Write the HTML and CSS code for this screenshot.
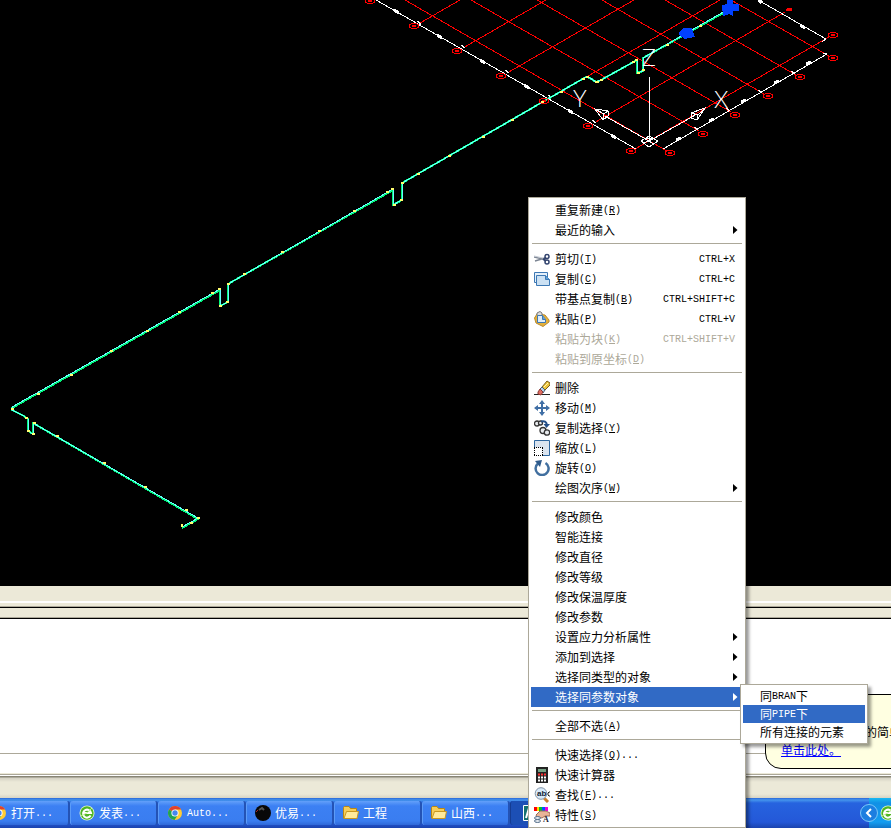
FILE: index.html
```html
<!DOCTYPE html>
<html lang="zh-CN">

<head>
    <meta charset="UTF-8" />
    <meta name="viewport" content="width=device-width, initial-scale=1.0" />
    <title>AutoCAD</title>
    <link rel="stylesheet" href="styles.css">
</head>

<body>
    <!-- Shared icons -->
    <svg class="defs" width="0" height="0" aria-hidden="true">
        <symbol id="mark" viewBox="0 0 10 6">
            <path d="M3 .5H7L9.500 2V4L7 5.500H3L.5 4V2ZM3 2L7 4M7 2L3 4M3 3H7" fill="none" stroke="#f00" />
        </symbol>
        <symbol id="chrome" viewBox="0 0 16 16">
            <circle cx="8" cy="8" r="7" fill="#fc3" />
            <path d="M8 8L2 4.400A7 7 0 0 1 14.200 4.600H8Z" fill="#e0412f" />
            <path d="M8 8L2 4.400A7 7 0 0 0 7.500 15L11 9.700Z" fill="#21a453" />
            <circle cx="8" cy="8" r="3.600" fill="#fff" />
            <circle cx="8" cy="8" r="2.700" fill="#4787ed" />
        </symbol>
        <symbol id="browser" viewBox="0 0 16 16">
            <circle cx="8" cy="8" r="7.500" fill="#e4f7d8" />
            <circle cx="8" cy="8" r="6.700" fill="#4fb523" />
            <path d="M11.600 10.500A4 4 0 1 1 12 8H4.500" fill="none" stroke="#fff" stroke-width="2" />
            <path d="M2 11Q8 9 13 3" fill="none" stroke="#c5ec9b" />
        </symbol>
        <symbol id="folder" viewBox="0 0 16 16">
            <path d="M.5 13V2.500L1.500 1.500H6L7.500 3.500H13.500V13Z" fill="#f6cd58" stroke="#b98713" />
            <path d="M1 13.500L3.500 6.500H15.500L14 13.500Z" fill="#ffea9b" stroke="#c9971f" />
        </symbol>
        <symbol id="arrow" viewBox="0 0 5 8">
            <path d="M0 0L4.500 4L0 8Z" fill="currentColor" />
        </symbol>
    </svg>

    <div class="desktop">
        <main class="canvas">
            <svg class="drawing" viewBox="0 0 891 586" preserveAspectRatio="xMinYMin slice" role="img" aria-label="管道轴测图">
                <!-- Axis grid -->
                <g class="grid">
                    <path d="M405 0L667 151M471 0L699 131M537 0L731 112M602 0L764 94M665 0L796 75M731 0L829 56" />
                    <path d="M420 23L460 0M463 48L546 0M507 73L634 0M550 98L720 0M594 123L785 12M635 149L829 37" />
                </g>
                <g class="frame">
                    <path d="M376 0L636 149M663 149L827 54L823 53M758 0L826 39L822 42M417 21L421 24L418 25M461 45L465 48M505 70L509 73M548 95L552 98M592 120L596 123M694 127L698 130M726 108L730 111M758 90L762 93M791 71L795 74" />
                </g>
                <g class="ticks">
                    <path d="M394 10L399 13M437 35L442 38M480 60L485 63M524 85L529 88M568 110L573 113M611 135L616 138M676 140L681 138M709 121L714 119M741 102L746 100M774 83L779 81M806 64L811 62M800 25L805 28M759 0L762 3" />
                </g>
                <g>
                    <use href="#mark" x="365" y="-2" width="10" height="6" />
                    <use href="#mark" x="409" y="23" width="10" height="6" />
                    <use href="#mark" x="452" y="48" width="10" height="6" />
                    <use href="#mark" x="496" y="73" width="10" height="6" />
                    <use href="#mark" x="583" y="123" width="10" height="6" />
                    <use href="#mark" x="626" y="148" width="10" height="6" />
                    <use href="#mark" x="665" y="150" width="10" height="6" />
                    <use href="#mark" x="698" y="131" width="10" height="6" />
                    <use href="#mark" x="730" y="112" width="10" height="6" />
                    <use href="#mark" x="763" y="93" width="10" height="6" />
                    <use href="#mark" x="795" y="74" width="10" height="6" />
                    <use href="#mark" x="828" y="55" width="10" height="6" />
                    <use href="#mark" x="828" y="32" width="10" height="6" />
                    <path d="M787 8H792V11H786V9Z" fill="#f00" />
                </g>

                <!-- Pipe run -->
                <g class="pipe">
                    <path d="M182 528L198 519L33 423V434L28 431V419L24 416L12 410V408L220 290V306L228 302V284L393 190V205L402 200V183L586 77L590 78L596 82L601 80L637 60V73L643 71V58L725 12" />
                    <path class="pipe-light" d="M182 527L198 518L33 423V434L28 431V419L24 416L12 410V407L220 289V306L228 302V284L393 189V205L402 200V183L586 77L590 78L596 82L601 80L637 60V73L643 71V58L725 11" />
                </g>
                <use href="#mark" x="539" y="98" width="10" height="6" />
                <path class="joints" d="M182 524v3M190 523h3M197 518h3M185 510h3M144 487h3M103 463h3M56 436h3M33 423h3M32 434h3M27 431h3M25 418h3M11 409h3M37 394h3M70 375h3M110 351h3M146 331h3M178 312h3M211 293h3M218 289h3M219 306h3M226 302h3M227 284h3M243 274h3M281 252h3M318 231h3M353 211h3M386 192h3M391 189h3M393 205h3M400 200h3M401 183h3M417 174h3M448 156h3M482 137h3M511 120h3M541 102h3M560 92h3M582 79h3M586 77h3M595 82h4M600 80h3M632 62h3M635 60h3M637 73h3M642 70h3M666 45h3M699 26h3" />
                <path d="M679 32L684 28H692L693 32L695 37L688 38L685 39L679 35Z" fill="#0040ff" />
                <path d="M727 0H733V4H739V11H733V16L729 14L723 16L722 5L727 4Z" fill="#0040ff" />

                <!-- UCS icon -->
                <g class="ucs">
                    <path d="M649.500 77V141L697 114M649 141L605 116" />
                    <path d="M641 141L649 136L658 141L649 147ZM645 139L654 144M654 138L644 143M646 138H653" />
                    <path d="M705 108L691 113V118L697 120ZM691 113L698 115L705 108M698 115L697 120" />
                    <path d="M595 109L608 111V116L603 120ZM595 109L604 114L608 111M604 114L603 120" />
                </g>
                <g class="axis-names">
                    <text x="573" y="107">Y</text>
                    <text x="714" y="108">X</text>
                    <text x="642" y="66">Z</text>
                </g>
            </svg>
        </main>

        <section class="command">
            <div class="scroll-strip"></div>
            <div class="dock-edge"></div>
            <div class="splitter"></div>
            <div class="history"></div>
            <div class="prompt"></div>
            <div class="status-bar"></div>
        </section>

        <footer class="taskbar">
            <nav class="tasks">
                <button class="task"><svg><use href="#chrome" /></svg>打开<span class="latin">...</span></button>
                <button class="task"><svg><use href="#browser" /></svg>发表<span class="latin">...</span></button>
                <button class="task"><svg><use href="#chrome" /></svg><span class="latin">Auto...</span></button>
                <button class="task">
                    <svg viewBox="0 0 16 16">
                        <circle cx="8" cy="8" r="8" fill="#080808" />
                        <path d="M4 5L7 3L9 5" fill="none" stroke="#555" stroke-width="2" />
                        <path d="M1 7L3 5" stroke="#a22" />
                    </svg>优易<span class="latin">...</span></button>
                <button class="task"><svg><use href="#folder" /></svg>工程</button>
                <button class="task"><svg><use href="#folder" /></svg>山西<span class="latin">...</span></button>
                <button class="task task-active" aria-label="AutoCAD">
                    <svg viewBox="0 0 16 16">
                        <path d="M.5 .5H15.500V15.500H.5Z" fill="#12706f" stroke="#fff" />
                        <path d="M3 13L6 3L9 13M4 9H9" fill="none" stroke="#fff" stroke-width="2" />
                    </svg></button>
            </nav>
            <div class="tray">
                <button class="chevron" aria-label="显示隐藏的图标">
                    <svg viewBox="0 0 18 18">
                        <circle cx="9" cy="9" r="8.500" fill="#1c7ee0" stroke="#7cc8f8" />
                        <path d="M11 5L7 9L11 13" fill="none" stroke="#fff" stroke-width="2" />
                    </svg>
                </button>
                <svg class="tray-icon"><use href="#browser" /></svg>
            </div>
        </footer>

        <aside class="balloon">
            <p class="balloon-text">的简单</p>
            <a href="#">单击此处。</a>
        </aside>

        <!-- Right-click menu -->
        <div class="menu context-menu">
            <button class="item"><i class="icon"></i>重复新建<span class="latin">(<u>R</u>)</span></button>
            <button class="item has-sub"><i class="icon"></i>最近的输入<svg class="arrow"><use href="#arrow" /></svg></button>
            <hr>
            <button class="item">
                <svg class="icon" viewBox="0 0 16 16">
                    <path d="M0 6L11 8.500M1 10L11 7" stroke="#7d8694" stroke-width="1.500" />
                    <path d="M0 5L9 7" stroke="#c4cad3" />
                    <circle cx="13" cy="5.500" r="2" fill="none" stroke="#34456f" stroke-width="1.500" />
                    <circle cx="13" cy="11" r="2" fill="none" stroke="#34456f" stroke-width="1.500" />
                    <path d="M9 8L12 10M10 8L12 7" stroke="#34456f" stroke-width="2" />
                </svg>剪切<span class="latin">(<u>T</u>)</span><kbd class="latin">CTRL+X</kbd></button>
            <button class="item">
                <svg class="icon" viewBox="0 0 16 16">
                    <path d="M.5 1.500H13.500V11.500H.5Z" fill="#e5f0fa" stroke="#3d78b4" />
                    <path d="M2.500 4.500H11.500L15.500 8.500V14.500H2.500Z" fill="#cce1f3" stroke="#3d78b4" />
                    <path d="M11.500 4.500V8.500H15.500" fill="#5da0d8" stroke="#3d78b4" />
                </svg>复制<span class="latin">(<u>C</u>)</span><kbd class="latin">CTRL+C</kbd></button>
            <button class="item"><i class="icon"></i>带基点复制<span class="latin">(<u>B</u>)</span><kbd class="latin">CTRL+SHIFT+C</kbd></button>
            <button class="item">
                <svg class="icon" viewBox="0 0 16 16">
                    <path d="M3 3L11 4L15 9V11L9 15.500L2 12L.5 7Z" fill="#e5b13c" stroke="#b98a2e" />
                    <path d="M3 4V2L6 .5L8 2V4" fill="#ddd" stroke="#777" />
                    <path d="M3.500 4.500H8.500L11.500 8.500V11.500H3.500Z" fill="#e0edf8" stroke="#3d78b4" />
                    <path d="M8.500 4.500V8.500H11.500" fill="#5da0d8" stroke="#3d78b4" />
                </svg>粘贴<span class="latin">(<u>P</u>)</span><kbd class="latin">CTRL+V</kbd></button>
            <button class="item" disabled><i class="icon"></i>粘贴为块<span class="latin">(<u>K</u>)</span><kbd class="latin">CTRL+SHIFT+V</kbd></button>
            <button class="item" disabled><i class="icon"></i>粘贴到原坐标<span class="latin">(<u>D</u>)</span></button>
            <hr>
            <button class="item">
                <svg class="icon" viewBox="0 0 16 16">
                    <path d="M0 14.500H16" stroke="#222" />
                    <path d="M8 7L13 1L16 3V5L10 11Z" fill="#edc43c" stroke="#765d1c" />
                    <path d="M6 9L8 7L11 10L9 13Z" fill="#b8d2e8" stroke="#456180" />
                    <path d="M4 12L6 9L9 12L7 15L4 14Z" fill="#e16e62" stroke="#8c3b35" />
                    <path d="M10 7L14 3" stroke="#fff7b2" />
                </svg>删除</button>
            <button class="item">
                <svg class="icon" viewBox="0 0 16 16">
                    <path d="M8 2V14M2 8H14" stroke="#3f6ea5" stroke-width="2" />
                    <path d="M8 0L11 4H5ZM8 16L5 12H11ZM0 8L4 5V11ZM16 8L12 11V5Z" fill="#3f6ea5" />
                </svg>移动<span class="latin">(<u>M</u>)</span></button>
            <button class="item">
                <svg class="icon" viewBox="0 0 16 16">
                    <g fill="#e9ecef" stroke="#333" stroke-width="1.300">
                        <circle cx="3" cy="3.500" r="2.500" />
                        <circle cx="6.500" cy="3" r="2" />
                        <circle cx="9" cy="10.500" r="3" />
                        <circle cx="13" cy="12.500" r="2.700" />
                    </g>
                    <path d="M7 1.500Q12 0 13 5" fill="none" stroke="#244f88" stroke-width="2" />
                    <path d="M9.500 4H16L12.500 8Z" fill="#244f88" />
                </svg>复制选择<span class="latin">(<u>Y</u>)</span></button>
            <button class="item">
                <svg class="icon" viewBox="0 0 16 16">
                    <path d="M.5 .5H15.500V15.500H.5Z" fill="#dbe4ef" stroke="#2f679f" />
                    <path d="M0 7.500H8.500V16H0Z" fill="#fff" />
                    <path d="M0 7.500H9M8.500 8V16M.5 8V16M0 15.500H9" fill="none" stroke="#000" stroke-dasharray="1 1" />
                </svg>缩放<span class="latin">(<u>L</u>)</span></button>
            <button class="item">
                <svg class="icon" viewBox="0 0 16 16">
                    <path d="M4 3.500A6.500 6.500 0 1 0 11.500 3" fill="none" stroke="#416f9f" stroke-width="2.500" />
                    <path d="M1 1L8 0L6 7Z" fill="#2e5a8b" />
                </svg>旋转<span class="latin">(<u>O</u>)</span></button>
            <button class="item has-sub"><i class="icon"></i>绘图次序<span class="latin">(<u>W</u>)</span><svg class="arrow"><use href="#arrow" /></svg></button>
            <hr>
            <button class="item"><i class="icon"></i>修改颜色</button>
            <button class="item"><i class="icon"></i>智能连接</button>
            <button class="item"><i class="icon"></i>修改直径</button>
            <button class="item"><i class="icon"></i>修改等级</button>
            <button class="item"><i class="icon"></i>修改保温厚度</button>
            <button class="item"><i class="icon"></i>修改参数</button>
            <button class="item has-sub"><i class="icon"></i>设置应力分析属性<svg class="arrow"><use href="#arrow" /></svg></button>
            <button class="item has-sub"><i class="icon"></i>添加到选择<svg class="arrow"><use href="#arrow" /></svg></button>
            <button class="item has-sub"><i class="icon"></i>选择同类型的对象<svg class="arrow"><use href="#arrow" /></svg></button>
            <div class="sub-wrap">
                <button class="item has-sub selected"><i class="icon"></i>选择同参数对象<svg class="arrow"><use href="#arrow" /></svg></button>
                <div class="menu submenu">
                    <button class="item">同<span class="latin">BRAN</span>下</button>
                    <button class="item selected">同<span class="latin">PIPE</span>下</button>
                    <button class="item">所有连接的元素</button>
                </div>
            </div>
            <hr>
            <button class="item"><i class="icon"></i>全部不选<span class="latin">(<u>A</u>)</span></button>
            <hr>
            <button class="item"><i class="icon"></i>快速选择<span class="latin">(<u>Q</u>)...</span></button>
            <button class="item">
                <svg class="icon" viewBox="0 0 16 16">
                    <path d="M2 0H14V16H2Z" fill="#222" />
                    <path d="M4 2H12V5H4Z" fill="#75a183" />
                    <path d="M4 7.500H12" stroke="#f33" stroke-width="2" stroke-dasharray="2 1" />
                    <path d="M4 10.500H12M4 13.500H12" stroke="#fff" stroke-width="2" stroke-dasharray="2 1" />
                </svg>快速计算器</button>
            <button class="item">
                <svg class="icon" viewBox="0 0 16 16">
                    <path d="M10 11L14 15" stroke="#cb7f2c" stroke-width="3" />
                    <circle cx="7" cy="6.500" r="5.800" fill="#d8eafa" stroke="#8194a8" />
                    <text class="find-text" x="3" y="9">ab</text>
                    <path d="M16 5H15L14 6V8L15 9H16" fill="none" stroke="#222" />
                </svg>查找<span class="latin">(<u>F</u>)...</span></button>
            <button class="item">
                <svg class="icon" viewBox="0 0 16 16">
                    <path d="M0 0H3V4H0Z" fill="#f00" />
                    <path d="M3 0H5V4H3Z" fill="#fd0" />
                    <path d="M5 0H8V4H5Z" fill="#0b3" />
                    <path d="M8 0H11V4H8Z" fill="#05f" />
                    <path d="M11 0H14V4H11Z" fill="#e0d" />
                    <path d="M2 8L6 4L12 4L16 6V9L11 9L8 11L3 10Z" fill="#e9b497" stroke="#9a6c57" />
                    <ellipse cx="3.500" cy="11" rx="3" ry="1.500" fill="#e2e7ec" stroke="#536d89" />
                    <ellipse cx="3.500" cy="14" rx="3" ry="1.500" fill="#e2e7ec" stroke="#536d89" />
                    <text class="prop-text" x="9" y="15">A</text>
                </svg>特性<span class="latin">(<u>S</u>)</span></button>
        </div>
    </div>
</body>

</html>
```
FILE: styles.css
```css
* {
    margin: 0;
    padding: 0;
    box-sizing: border-box;
}

body {
    font-family: "Noto Sans CJK SC", sans-serif;
    font-size: 12px;
    line-height: 18px;
    color: #000;
    overflow: hidden;
}

button {
    font: inherit;
    color: inherit;
    border: none;
    background: none;
}

.defs {
    position: absolute;
}

.latin {
    padding-top: 2px;
    font-family: "Liberation Mono", monospace;
    font-size: 10px;
}

.desktop {
    position: relative;
    display: flex;
    flex-direction: column;
    height: 100vh;
    min-height: 828px;
    overflow: hidden;
}

/* Drawing area */
.canvas {
    flex: 1;
    min-height: 0;
    background-color: #000;
    overflow: hidden;
}

.drawing {
    display: block;
    width: 100%;
    height: 100%;
    shape-rendering: crispEdges;
}

.grid path {
    fill: none;
    stroke: #f00;
}

.frame path,
.ucs path {
    fill: none;
    stroke: #fff;
}

.ticks path {
    stroke: #fff;
    stroke-width: 3px;
}

.pipe path {
    fill: none;
    stroke: #00f57a;
    stroke-width: 2px;
}

.pipe .pipe-light {
    stroke: #6ff;
    stroke-width: 1px;
}

.joints {
    fill: none;
    stroke: #ffff70;
    stroke-width: 2px;
}

.axis-names {
    font-family: Lato, sans-serif;
    font-size: 23px;
    font-weight: 300;
    fill: #fff;
}

/* Command window */
.scroll-strip {
    height: 20px;
    background-color: #ece9d8;
    border-bottom: 3px solid #ece9d8;
    background-image: linear-gradient(#fff, #fff);
    background-repeat: no-repeat;
    background-size: 100% 2px;
    background-position: 0 15px;
}

.dock-edge {
    height: 2px;
    background-color: #000;
    border-top: 1px solid #aca899;
}

.splitter {
    height: 11px;
    background-color: #ece9d8;
    border-bottom: 1px solid #000;
    box-shadow: inset 0 -1px #aca899;
}

.history {
    height: 135px;
    background-color: #fff;
    border-bottom: 1px solid #aca899;
}

.prompt {
    height: 20px;
    background-color: #fff;
    border-bottom: 1px solid #ece9d8;
}

.status-bar {
    height: 24px;
    border-top: 1px solid #aca899;
    background-image: linear-gradient(#fff 1px, #888576 1px, #888576 2px, #d4d1c3 3px, #ece9d8 7px, #ece9d8 19px, #d8d4c4);
}

/* Taskbar */
.taskbar {
    display: flex;
    justify-content: space-between;
    height: 30px;
    background-image: linear-gradient(#2b67d8, #4595ed 2px, #2663df 5px, #2458d8 24px, #1b43ae);
}

.tasks {
    display: flex;
    margin-left: -18px;
    padding: 3px 0;
}

.task {
    display: flex;
    align-items: center;
    width: 88px;
    padding-left: 8px;
    color: #fff;
    background-image: linear-gradient(#63a0fa, #3c80f3 5px, #3a7df0 20px, #2f68d8);
    border-left: 1px solid #5c9cf8;
    border-right: 2px solid #2453b5;
    border-radius: 3px;
}

.task svg {
    flex: none;
    width: 16px;
    height: 16px;
    margin-right: 4px;
}

.task-active {
    padding-left: 12px;
    background: #1c4fb5;
    border-color: #153c91;
}

.tray {
    display: flex;
    align-items: center;
    width: 22px;
    background-image: linear-gradient(#19b9f2, #1190e5 5px, #149df0 24px, #1074c7);
}

.chevron {
    flex: none;
    width: 18px;
    height: 18px;
    margin-left: -9px;
}

.chevron svg {
    display: block;
}

.tray-icon {
    flex: none;
    width: 16px;
    height: 16px;
    margin-left: 2px;
}

/* Tray balloon, runs off the right edge */
.balloon {
    position: absolute;
    left: 765px;
    right: -20px;
    bottom: 59px;
    height: 75px;
    padding: 28px 0 0 15px;
    background-color: #ffffe1;
    border: 1px solid #000;
    border-radius: 16px;
    white-space: nowrap;
}

.balloon-text {
    padding-left: 84px;
}

.balloon a {
    color: #00f;
}

/* Menus */
.menu {
    position: absolute;
    padding: 2px;
    background-color: #fff;
    border: 1px solid #aca899;
    box-shadow: 3px 3px 3px rgba(0, 0, 0, 0.4);
}

.context-menu {
    top: 197px;
    left: 528px;
    width: 218px;
}

.menu hr {
    height: 1px;
    margin: 3px 1px 5px;
    border: none;
    background-color: #aca899;
}

.item {
    display: flex;
    align-items: center;
    width: 100%;
    height: 20px;
    padding: 0 8px 0 3px;
    white-space: nowrap;
}

.item:disabled {
    color: #aca899;
}

.item.selected,
.item:hover:enabled {
    color: #fff;
    background-color: #316ac5;
}

.item.has-sub {
    padding-right: 5px;
}

.icon {
    flex: none;
    width: 16px;
    height: 16px;
    margin-right: 5px;
}

.item kbd,
.arrow {
    margin-left: auto;
}

.arrow {
    width: 5px;
    height: 8px;
}

.sub-wrap {
    position: relative;
}

.submenu {
    top: -3px;
    left: 209px;
    width: 128px;
}

.submenu .item {
    height: 18px;
    padding-left: 17px;
}

.find-text {
    font: bold 8px "Liberation Sans", sans-serif;
    fill: #123;
}

.prop-text {
    font: bold 8px "Liberation Serif", serif;
    fill: #223;
}
```
